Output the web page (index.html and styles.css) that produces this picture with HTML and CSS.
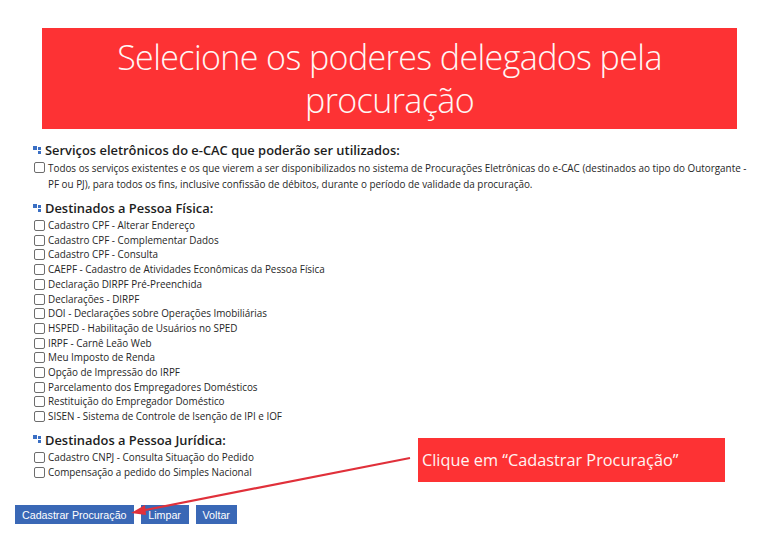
FILE: index.html
```html
<!DOCTYPE html>
<html lang="pt-BR">
<head>
  <meta charset="UTF-8" />
  <meta name="viewport" content="width=device-width, initial-scale=1.0"/>
  <title>Procuração - Poderes</title>
  <link rel="stylesheet" href="styles.css">
</head>
<body>
  <div class="banner">
    <h1>Selecione os poderes delegados pela procuração</h1>
  </div>

  <form class="powers">
    <section class="group">
      <h2><svg class="bullet" width="9" height="9" viewBox="0 0 9 9"><rect x="0" y="0" width="4" height="4" fill="#3a6fc4"/><rect x="5" y="1" width="3" height="3" fill="#3a6fc4"/><rect x="5" y="5" width="3" height="3" fill="#3a6fc4"/></svg>Serviços eletrônicos do e-CAC que poderão ser utilizados:</h2>
      <label class="opt"><input type="checkbox"><span>Todos os serviços existentes e os que vierem a ser disponibilizados no sistema de Procurações Eletrônicas do e-CAC (destinados ao tipo do Outorgante - PF ou PJ), para todos os fins, inclusive confissão de débitos, durante o período de validade da procuração.</span></label>
    </section>

    <section class="group">
      <h2><svg class="bullet" width="9" height="9" viewBox="0 0 9 9"><rect x="0" y="0" width="4" height="4" fill="#3a6fc4"/><rect x="5" y="1" width="3" height="3" fill="#3a6fc4"/><rect x="5" y="5" width="3" height="3" fill="#3a6fc4"/></svg>Destinados a Pessoa Física:</h2>
      <label class="opt"><input type="checkbox"><span>Cadastro CPF - Alterar Endereço</span></label>
      <label class="opt"><input type="checkbox"><span>Cadastro CPF - Complementar Dados</span></label>
      <label class="opt"><input type="checkbox"><span>Cadastro CPF - Consulta</span></label>
      <label class="opt"><input type="checkbox"><span>CAEPF - Cadastro de Atividades Econômicas da Pessoa Física</span></label>
      <label class="opt"><input type="checkbox"><span>Declaração DIRPF Pré-Preenchida</span></label>
      <label class="opt"><input type="checkbox"><span>Declarações - DIRPF</span></label>
      <label class="opt"><input type="checkbox"><span>DOI - Declarações sobre Operações Imobiliárias</span></label>
      <label class="opt"><input type="checkbox"><span>HSPED - Habilitação de Usuários no SPED</span></label>
      <label class="opt"><input type="checkbox"><span>IRPF - Carnê Leão Web</span></label>
      <label class="opt"><input type="checkbox"><span>Meu Imposto de Renda</span></label>
      <label class="opt"><input type="checkbox"><span>Opção de Impressão do IRPF</span></label>
      <label class="opt"><input type="checkbox"><span>Parcelamento dos Empregadores Domésticos</span></label>
      <label class="opt"><input type="checkbox"><span>Restituição do Empregador Doméstico</span></label>
      <label class="opt"><input type="checkbox"><span>SISEN - Sistema de Controle de Isenção de IPI e IOF</span></label>
    </section>

    <section class="group">
      <h2><svg class="bullet" width="9" height="9" viewBox="0 0 9 9"><rect x="0" y="0" width="4" height="4" fill="#3a6fc4"/><rect x="5" y="1" width="3" height="3" fill="#3a6fc4"/><rect x="5" y="5" width="3" height="3" fill="#3a6fc4"/></svg>Destinados a Pessoa Jurídica:</h2>
      <label class="opt"><input type="checkbox"><span>Cadastro CNPJ - Consulta Situação do Pedido</span></label>
      <label class="opt"><input type="checkbox"><span>Compensação a pedido do Simples Nacional</span></label>
    </section>

    <div class="buttons">
      <button type="button">Cadastrar Procuração</button>
      <button type="button" class="wide">Limpar</button>
      <button type="button">Voltar</button>
    </div>
  </form>

  <!-- note pointing at the submit button -->
  <div class="callout">Clique em “Cadastrar Procuração”</div>
  <svg class="arrow" width="768" height="538" viewBox="0 0 768 538">
    <line x1="410" y1="458" x2="140" y2="511" stroke="#e0303a" stroke-width="2.2"/>
    <polygon points="131,513 145,505 146,515" fill="#e0303a"/>
  </svg>
</body>
</html>
```

FILE: styles.css
```css
body { margin: 0; background: #fff; font-family: "Open Sans", sans-serif; color: #222; position: relative; width: 768px; height: 538px; overflow: hidden; }

.banner { margin: 28px 0 0 42px; width: 695px; height: 101px; background: #fd3234; display: flex; align-items: center; justify-content: center; }
.banner h1 { margin: 0; font-weight: 300; font-size: 34px; line-height: 43px; color: #fff6f4; text-align: center; width: 620px; letter-spacing: -0.6px; }

.powers { padding: 12px 0 0 33px; }
.group { margin-bottom: 7px; }
.group h2 { margin: 0 0 1px; font-size: 12.9px; font-weight: 600; line-height: 18px; color: #1d1d1d; display: flex; align-items: center; gap: 3px; }
.bullet { flex: none; }

.opt { display: flex; align-items: flex-start; font-size: 9.9px; line-height: 14.7px; color: #262626; }
.opt input { appearance: none; -webkit-appearance: none; flex: none; width: 11px; height: 11px; margin: 2px 3px 0 1px; border: 1px solid #6d6d6d; border-radius: 2px; background: #fff; }
.group:first-child .opt { line-height: 16px; }
.group:first-child .opt span { padding-right: 14px; }

.buttons { display: flex; gap: 7px; margin: 26px 0 0 -18px; }
.buttons button { background: #3a68b6; color: #fff; border: none; font-family: "Liberation Sans", Arial, sans-serif; font-size: 10.7px; height: 19px; padding: 0 7px; }
.buttons .wide { min-width: 48px; }

.callout { position: absolute; left: 418px; top: 438px; width: 303px; height: 44px; padding-left: 4px; background: #fd3234; color: #fff4f2; font-size: 16.3px; font-weight: 400; line-height: 44px; }
.arrow { position: absolute; left: 0; top: 0; pointer-events: none; }
```
